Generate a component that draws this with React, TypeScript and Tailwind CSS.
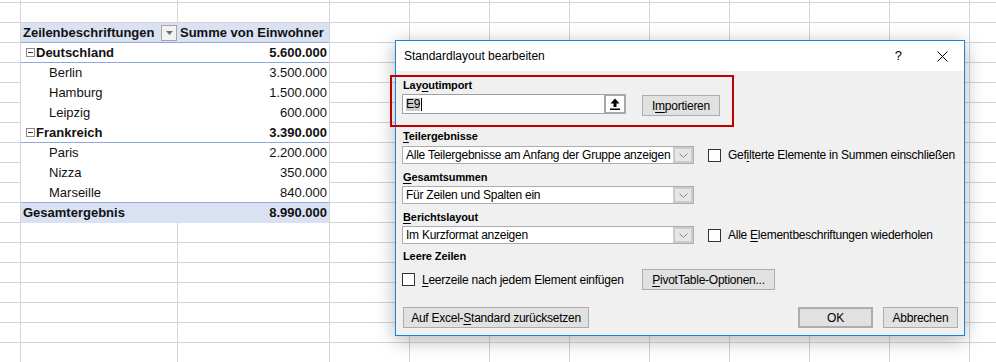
import React from "react";

const U = ({ children }: { children: React.ReactNode }) => (
  <span className="underline decoration-1 underline-offset-[2px]">{children}</span>
);

type Row = { label: string; value: string; kind: "group" | "item"; line: boolean };

const rows: Row[] = [
  { label: "Deutschland", value: "5.600.000", kind: "group", line: true },
  { label: "Berlin", value: "3.500.000", kind: "item", line: false },
  { label: "Hamburg", value: "1.500.000", kind: "item", line: false },
  { label: "Leipzig", value: "600.000", kind: "item", line: false },
  { label: "Frankreich", value: "3.390.000", kind: "group", line: true },
  { label: "Paris", value: "2.200.000", kind: "item", line: false },
  { label: "Nizza", value: "350.000", kind: "item", line: false },
  { label: "Marseille", value: "840.000", kind: "item", line: true },
];

function CollapseIcon() {
  return (
    <span className="mr-[1px] flex h-[9px] w-[9px] items-center justify-center border border-[#8c8c8c] bg-white">
      <span className="h-[1px] w-[5px] bg-[#333]" />
    </span>
  );
}

function PivotTable() {
  return (
    <div className="col-span-2 col-start-2 row-span-10 row-start-3 flex flex-col border-r border-b border-[#d4d4d4] bg-white text-[13px] text-[#111] font-['Liberation_Sans',Arial,sans-serif]">
      <div className="flex h-[20px] shrink-0 items-center border-b border-[#8ea9db] bg-[#d9e1f2] font-bold">
        <div className="flex w-[157px] items-center justify-between pl-[2px] pr-[1px]">
          <span className="whitespace-nowrap">Zeilenbeschriftungen</span>
          <span className="flex h-[16px] w-[16px] items-center justify-center border border-[#a6a6a6] bg-[#f2f2f2]">
            <svg width="7" height="4" viewBox="0 0 7 4">
              <polygon points="0,0 7,0 3.5,4" fill="#6d6d6d" />
            </svg>
          </span>
        </div>
        <div className="flex-1 whitespace-nowrap pl-[2px]">Summe von Einwohner</div>
      </div>
      {rows.map((r) => (
        <div
          key={r.label}
          className={
            "flex h-[20px] shrink-0 items-center border-b " +
            (r.line ? "border-[#8ea9db] " : "border-white ") +
            (r.kind === "group" ? "font-bold" : "")
          }
        >
          {r.kind === "group" ? (
            <div className="flex w-[157px] items-center pl-[5px]">
              <CollapseIcon />
              <span>{r.label}</span>
            </div>
          ) : (
            <div className="w-[157px] pl-[28px]">{r.label}</div>
          )}
          <div className="flex-1 pr-[2px] text-right">{r.value}</div>
        </div>
      ))}
      <div className="flex flex-1 items-center bg-[#d9e1f2] font-bold">
        <div className="w-[157px] pl-[2px]">Gesamtergebnis</div>
        <div className="flex-1 pr-[2px] text-right">8.990.000</div>
      </div>
    </div>
  );
}

function Sheet() {
  const cells = Array.from({ length: 19 * 12 - 20 });
  return (
    <div className="grid h-[380px] w-[1050px] grid-cols-[21px_157px_152px_repeat(9,80px)] grid-rows-[3px_repeat(18,20px)]">
      <PivotTable />
      {cells.map((_, i) => (
        <div key={i} className="border-r border-b border-[#d4d4d4]" />
      ))}
    </div>
  );
}

function Btn({
  children,
  className,
}: {
  children: React.ReactNode;
  className: string;
}) {
  return (
    <div
      className={
        "flex h-[21px] shrink-0 items-center justify-center whitespace-nowrap border border-[#adadad] bg-[#e1e1e1] " +
        className
      }
    >
      {children}
    </div>
  );
}

function Label({ children, className }: { children: React.ReactNode; className: string }) {
  return (
    <div
      className={
        "ml-[1px] h-[14px] whitespace-nowrap text-[11px] font-bold leading-[14px] tracking-[-0.1px] " +
        className
      }
    >
      {children}
    </div>
  );
}

function Chevron() {
  return (
    <svg width="9" height="5" viewBox="0 0 9 5">
      <polyline points="0.5,0.5 4.5,4.5 8.5,0.5" fill="none" stroke="#8a8a8a" strokeWidth="1" />
    </svg>
  );
}

function Select({ children }: { children: React.ReactNode }) {
  return (
    <div className="flex h-[18px] w-[292px] shrink-0 border border-[#adadad] bg-white">
      <div className="flex-1 overflow-hidden whitespace-nowrap pl-[3px] leading-[16px]">{children}</div>
      <div className="flex w-[20px] items-center justify-center border-2 border-[#cccccc] bg-[#e5e5e5]">
        <Chevron />
      </div>
    </div>
  );
}

function Checkbox() {
  return <div className="h-[13px] w-[13px] shrink-0 border border-[#333333] bg-white" />;
}

function Dialog() {
  return (
    <div className="absolute left-[395px] top-[40px] w-[570px] border border-[#1883d7] bg-[#f0f0f0] text-black shadow-[0_4px_18px_rgba(0,0,0,0.3)] font-['Liberation_Sans',Arial,sans-serif]">
      <div className="flex h-[30px] items-center bg-white pl-[8px] pr-[16px] text-[12px]">
        <span>Standardlayout bearbeiten</span>
        <span className="ml-auto text-[13px]">?</span>
        <svg className="ml-[35px]" width="11" height="11" viewBox="0 0 11 11">
          <path d="M0.5 0.5 L10.5 10.5 M10.5 0.5 L0.5 10.5" stroke="#000" strokeWidth="1" />
        </svg>
      </div>
      <div className="flex flex-col px-[6px] pb-[7px] pt-[7px] text-[12px] tracking-[-0.25px]">
        <Label className="">
          Lay<U>o</U>utimport
        </Label>
        <div className="mt-[2px] flex h-[20px] items-start">
          <div className="flex h-[20px] w-[224px]">
            <div className="flex flex-1 items-center border border-r-0 border-[#a0a0a0] bg-white pl-[3px]">
              <span className="bg-[#cccccc] leading-[13px]">E9</span>
              <span className="ml-[1px] h-[13px] w-[1px] bg-black" />
            </div>
            <div className="flex w-[22px] items-center justify-center border-2 border-[#a8a8a8] bg-white">
              <svg width="10" height="12" viewBox="0 0 10 12">
                <path d="M5 0.5 L9.5 5.5 H6.5 V9 H3.5 V5.5 H0.5 Z" fill="#000" />
                <rect x="0" y="10.5" width="10" height="1.5" fill="#000" />
              </svg>
            </div>
          </div>
          <Btn className="ml-[16px] mt-[1px] w-[78px]">
            I<U>m</U>portieren
          </Btn>
        </div>

        <Label className="mt-[15px]">
          <U>T</U>eilergebnisse
        </Label>
        <div className="mt-[3px] flex items-center">
          <Select>Alle Teilergebnisse am Anfang der Gruppe anzeigen</Select>
          <div className="ml-[14px] flex items-center">
            <Checkbox />
            <span className="ml-[7px] whitespace-nowrap">
              Gef<U>i</U>lterte Elemente in Summen einschließen
            </span>
          </div>
        </div>

        <Label className="mt-[6px]">
          <U>G</U>esamtsummen
        </Label>
        <div className="mt-[2px] flex items-center">
          <Select>Für Zeilen und Spalten ein</Select>
        </div>

        <Label className="mt-[6px]">
          <U>B</U>erichtslayout
        </Label>
        <div className="mt-[2px] flex items-center">
          <Select>Im Kurzformat anzeigen</Select>
          <div className="ml-[14px] flex items-center">
            <Checkbox />
            <span className="ml-[7px] whitespace-nowrap">
              Alle <U>E</U>lementbeschriftungen wiederholen
            </span>
          </div>
        </div>

        <Label className="mt-[5px]">Leere Zeilen</Label>
        <div className="mt-[6px] flex h-[21px] items-center">
          <div className="flex w-[240px] items-center">
            <Checkbox />
            <span className="ml-[7px] whitespace-nowrap">
              <U>L</U>eerzeile nach jedem Element einfügen
            </span>
          </div>
          <Btn className="w-[133px]">
            <U>P</U>ivotTable-Optionen...
          </Btn>
        </div>

        <div className="mt-[17px] flex items-center">
          <Btn className="ml-[1px] w-[186px]">
            Auf Excel-<U>S</U>tandard zurücksetzen
          </Btn>
          <Btn className="ml-auto w-[75px] border-2 border-[#0078d7]">OK</Btn>
          <Btn className="ml-[10px] w-[75px]">Abbrechen</Btn>
        </div>
      </div>
    </div>
  );
}

export default function App() {
  return (
    <div className="relative h-[362px] w-[996px] overflow-hidden bg-white">
      <Sheet />
      <Dialog />
      <div className="absolute left-[390px] top-[75px] h-[52px] w-[344px] border-2 border-[#c00000]" />
    </div>
  );
}
